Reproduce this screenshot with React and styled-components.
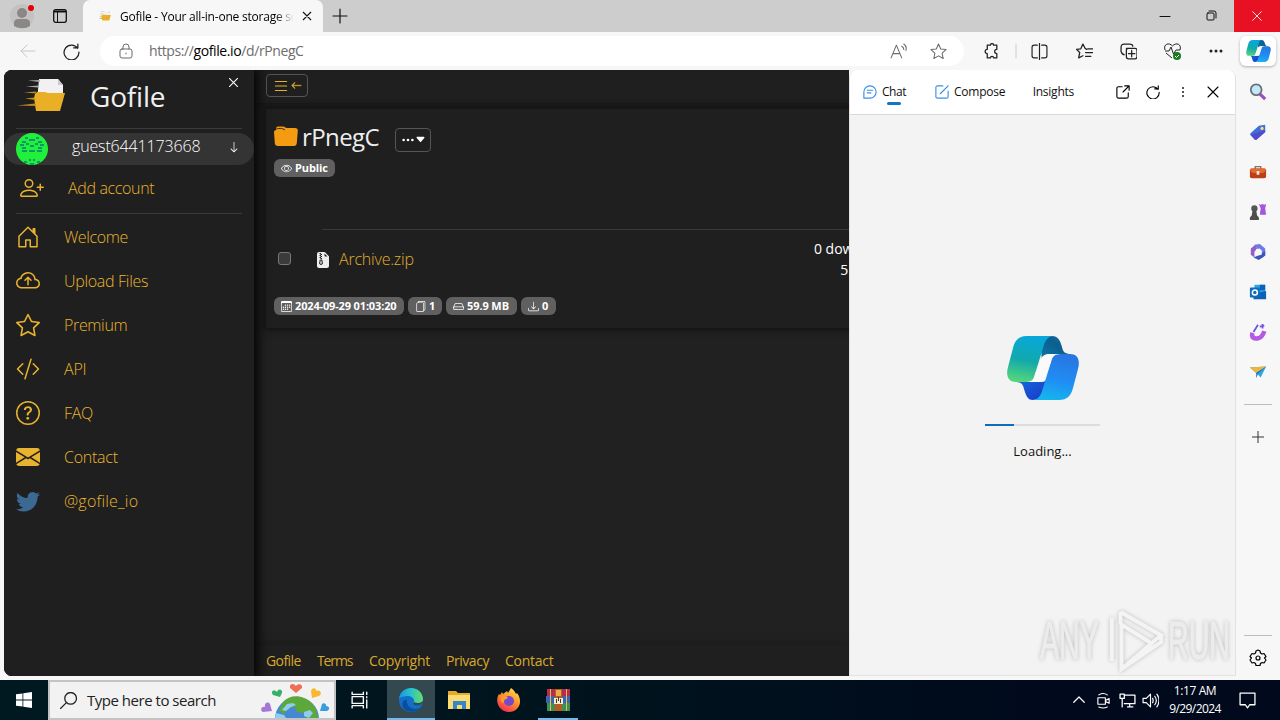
import React from 'react';
import styled, { createGlobalStyle } from 'styled-components';
import {
    BsPersonPlus, BsHouseDoor, BsCloudArrowUp, BsStar, BsCodeSlash, BsQuestionCircle,
    BsEnvelopeFill, BsTwitter, BsArrowLeft, BsArrowDown, BsList, BsThreeDots, BsCaretDownFill, BsEye,
    BsCalendar3, BsFileEarmarkZipFill, BsHdd, BsDownload, BsFiles
} from 'react-icons/bs';

const GlobalStyle = createGlobalStyle`
    * {
        box-sizing: border-box;
    }
    body {
        margin: 0;
        width: 1280px;
        height: 720px;
        overflow: hidden;
        font-family: 'Open Sans', 'Noto Sans', sans-serif;
        font-size: 13px;
    }
    svg {
        display: block;
        flex: none;
    }
`

const Screen = styled.div`
    display: flex;
    flex-direction: column;
    width: 1280px;
    height: 720px;
    background-color: #f7f7f7;
    position: relative;
    overflow: hidden;
`

const Label = styled.span`
    white-space: pre;
    flex: none;
    padding-top: ${({drop}) => drop || 0}px;
    font-size: ${({size}) => size || 13}px;
    font-weight: ${({weight}) => weight || 400};
    letter-spacing: ${({spacing}) => spacing || 0}px;
    color: ${({color}) => color || 'inherit'};
    line-height: 1.2;
`

const Gap = styled.div`
    flex: ${({grow}) => grow ? 1 : 'none'};
    width: ${({w}) => w || 0}px;
    height: ${({h}) => h || 0}px;
`

/* browser chrome */

const TitleBar = styled.div`
    display: flex;
    height: 32px;
    background-color: #cdcdcd;
`

const Profile = styled.div`
    display: flex;
    align-items: center;
    gap: 17px;
    width: 83px;
    padding-left: 10px;
`

const Tab = styled.div`
    display: flex;
    align-items: center;
    width: 240px;
    padding: 0 10px 0 16px;
    border-radius: 7px 7px 0 0;
    background-color: #f7f7f7;
`

const TabTitle = styled.div`
    width: 174px;
    margin: 0 8px 0 8px;
    overflow: hidden;
    -webkit-mask-image: linear-gradient(90deg, #000 155px, transparent 174px);
`

const CloseWindow = styled.div`
    display: flex;
    align-items: center;
    justify-content: center;
    width: 46px;
    background-color: #e81123;
`

const Toolbar = styled.div`
    display: flex;
    align-items: center;
    height: 38px;
    color: #222;
`

const Address = styled.div`
    display: flex;
    align-items: center;
    width: 864px;
    height: 30px;
    padding: 0 17px 0 18px;
    border-radius: 15px;
    background-color: #fff;
    color: #6d6d6d;
`

const CopilotButton = styled.div`
    display: flex;
    align-items: center;
    justify-content: center;
    width: 36px;
    height: 30px;
    border-radius: 6px;
    background-color: #fff;
    box-shadow: 0 1px 3px rgba(0, 0, 0, .3);
`

const Body = styled.div`
    display: flex;
    height: 610px;
    padding: 0 0 4px 4px;
`

/* gofile page */

const Page = styled.div`
    display: flex;
    width: 845px;
    height: 606px;
    border-radius: 8px 0 0 8px;
    overflow: hidden;
    background-color: #212121;
    color: #fff;
`

const Sidebar = styled.div`
    display: flex;
    flex-direction: column;
    width: 250px;
    z-index: 1;
    background-color: #1f1f1f;
    box-shadow: 2px 0 10px 2px #050505;
`

const Brand = styled.div`
    display: flex;
    height: 58px;
    padding: 9px 14px 0 13px;
    align-items: flex-start;
`

const BrandClose = styled.div`
    margin-top: -3px;
`

const Divider = styled.div`
    height: 1px;
    margin: 0 12px;
    background-color: #3b3b3b;
`

const Account = styled.div`
    display: flex;
    align-items: center;
    height: 32px;
    margin-top: 4px;
    padding: 0 14px 0 12px;
    border-radius: 16px;
    background-color: #343434;
`

const AccountName = styled.div`
    display: flex;
    flex: 1;
    align-items: center;
    justify-content: space-between;
    padding-bottom: 5px;
`

const MenuItem = styled.div`
    display: flex;
    align-items: center;
    height: 44px;
    padding-left: ${({indent}) => indent || 12}px;
    gap: 24px;
    color: #e8b42f;
`

const Main = styled.div`
    display: flex;
    flex-direction: column;
    width: 595px;
`

const Header = styled.div`
    height: 33px;
    padding: 4px 12px;
    background-color: #1f1f1f;
    box-shadow: 0 1px 8px #141414;
`

const OutlineButton = styled.div`
    display: flex;
    align-items: center;
    justify-content: center;
    gap: ${({gap}) => gap || 0}px;
    width: ${({w}) => w}px;
    height: ${({h}) => h}px;
    margin-top: ${({drop}) => drop || 0}px;
    border: 1px solid #555;
    border-radius: 4px;
    color: ${({color}) => color};
`

const Card = styled.div`
    display: flex;
    flex-direction: column;
    height: 219px;
    width: 700px;
    margin: 6px 0 0 12px;
    padding: 0 8px;
    background-color: #1f1f1f;
    box-shadow: 0 0 6px 2px #121212;
`

const Row = styled.div`
    display: flex;
    align-items: center;
    height: ${({h}) => h}px;
    gap: ${({gap}) => gap || 0}px;
`

const Badge = styled.div`
    display: flex;
    align-items: center;
    gap: 3px;
    height: 18px;
    width: ${({w}) => w}px;
    padding-left: 7px;
    border-radius: 6px;
    background-color: #606060;
`

const Checkbox = styled.div`
    width: 13px;
    height: 13px;
    margin: 0 0 2px 4px;
    border: 1px solid #777;
    border-radius: 3px;
    background-color: #3b3b3b;
`

const FileLine = styled.div`
    height: 1px;
    margin-left: 48px;
    background-color: #383838;
`

const Stats = styled.div`
    display: flex;
    flex-direction: column;
    align-items: flex-end;
    gap: 4px;
    width: 120px;
    padding-top: 1px;
`

const Footer = styled.div`
    display: flex;
    align-items: center;
    height: 31px;
    margin-top: auto;
    padding-left: 12px;
    background-color: #1f1f1f;
    box-shadow: 0 0 8px #181818;
    color: #d9a92e;
`

const FooterLink = styled.div`
    width: ${({w}) => w}px;
`

/* copilot panel */

const Panel = styled.div`
    display: flex;
    flex-direction: column;
    width: 387px;
    border: 1px solid #e2e2e2;
    border-width: 0 1px 1px 1px;
    border-radius: 8px 8px 0 0;
    background-color: #f3f3f3;
    overflow: hidden;
`

const PanelHeader = styled.div`
    display: flex;
    align-items: center;
    height: 45px;
    border-bottom: 1px solid #dadada;
    background-color: #fff;
`

const ChatTab = styled.div`
    display: flex;
    flex-direction: column;
    align-items: center;
    width: 24px;
    padding-top: 2px;
    margin-top: 4px;
    gap: 3px;
    &:after {
        content: '';
        width: 14px;
        height: 3px;
        border-radius: 2px;
        background-color: #0f77c8;
    }
`

const Loader = styled.div`
    display: flex;
    flex-direction: column;
    align-items: center;
    padding-top: 221px;
`

const Progress = styled.div`
    width: 115px;
    height: 2px;
    margin: 24px 0 18px;
    background: linear-gradient(90deg, #0f6cbd 29px, #dcdcdc 29px);
`

const Rail = styled.div`
    display: flex;
    flex-direction: column;
    align-items: center;
    width: 44px;
    padding-top: 13px;
`

const RailIcon = styled.div`
    height: 20px;
    margin-bottom: 20px;
`

const RailLine = styled.div`
    width: 28px;
    height: 1px;
    flex: none;
    background-color: #bdbdbd;
`

const Watermark = styled.div`
    position: absolute;
    left: 1040px;
    top: 608px;
    display: flex;
    align-items: center;
    height: 66px;
    width: 194px;
    filter: drop-shadow(0 0 2px rgba(0, 0, 0, .22));
`

const MarkText = styled.div`
    width: ${({w}) => w}px;
    font-family: 'Liberation Sans Narrow', 'Liberation Sans', sans-serif;
    font-size: 53px;
    line-height: 66px;
    color: #ececec;
    -webkit-text-stroke: 1px #ececec;
    white-space: nowrap;
    transform: scaleX(.54);
    transform-origin: 0 50%;
`

/* taskbar */

const Taskbar = styled.div`
    display: flex;
    align-items: center;
    height: 40px;
    background: linear-gradient(90deg, #001820, #00131d 50%, #000a1c 80%);
    color: #fff;
`

const StartButton = styled.div`
    display: flex;
    align-items: center;
    justify-content: center;
    width: 48px;
`

const Search = styled.div`
    display: flex;
    align-items: center;
    width: 288px;
    height: 40px;
    padding-left: 10px;
    border: 2px solid #c3c3c3;
    background-color: #f2f2f2;
    color: #222;
    overflow: hidden;
`

const Task = styled.div`
    display: flex;
    align-items: center;
    justify-content: center;
    width: ${({w}) => w || 48}px;
    height: 40px;
    margin-right: ${({mr}) => mr || 0}px;
    background-color: ${({$active}) => $active ? '#344850' : 'transparent'};
    box-shadow: ${({$open}) => $open ? 'inset 0 -2px #76b9ed' : 'none'};
`

const Clock = styled.div`
    display: flex;
    flex-direction: column;
    align-items: center;
    gap: 4px;
    width: 56px;
    margin: 0 16px 0 8px;
`

const Line = ({w = 16, h = w, box = '0 0 16 16', d, stroke = 'currentColor', sw = 1}) => (
    <svg width={w} height={h} viewBox={box} fill="none" stroke={stroke} strokeWidth={sw} strokeLinecap="round" strokeLinejoin="round">
        <path d={d}/>
    </svg>
)

const icons = {
    close: 'M3 3l10 10M13 3L3 13',
    star: 'M8 1l2.1 4.6 5 .6-3.700 3.400 1 5L8 12.100l-4.400 2.500 1-5L.9 6.200l5-.6z',
    reload: 'M14 4.500V1M14 4.500h-4M13.800 5A7 7 0 1 0 15 8.500',
};

const CopilotLogo = ({w, h}) => (
    <svg width={w} height={h} viewBox="0 0 72 64">
        <defs>
            <linearGradient id="cpGreen" x1=".6" y1="0" x2=".4" y2="1">
                <stop offset="0" stopColor="#08a7dc"/>
                <stop offset=".55" stopColor="#12a9ac"/>
                <stop offset="1" stopColor="#52d57c"/>
            </linearGradient>
            <linearGradient id="cpBlue" x1=".6" y1="0" x2=".4" y2="1">
                <stop offset="0" stopColor="#2876df"/>
                <stop offset=".55" stopColor="#218cf4"/>
                <stop offset="1" stopColor="#15b5ed"/>
            </linearGradient>
            <linearGradient id="cpTop" x1="0" y1="1" x2="1" y2="0">
                <stop offset="0" stopColor="#0b7ba8"/>
                <stop offset=".6" stopColor="#0b5f8f"/>
                <stop offset="1" stopColor="#1078ac"/>
            </linearGradient>
            <linearGradient id="cpLow" x1="0" y1="0" x2="1" y2="1">
                <stop offset="0" stopColor="#176fdf"/>
                <stop offset="1" stopColor="#1836c7"/>
            </linearGradient>
        </defs>
        <path fill="url(#cpTop)" d="M33 0h12c6 0 8 4 10 11 1 5 3 7 9 7H45c-6 0-8 2-10 8z"/>
        <path fill="url(#cpLow)" d="M8 46h26c4 0 6-2 8-6l-6 14c-2 7-5 10-10 10-6 0-7-5-9-11-1-5-3-7-9-7z"/>
        <path fill="url(#cpGreen)" d="M20 0h27c-6 0-9 4-11 12l-8 26c-1 5-3 8-8 8H9C0 46-1 38 1 31L6 12C8 4 12 0 20 0z"/>
        <path fill="url(#cpBlue)" d="M53 18h10c9 0 10 8 8 15l-5 19c-2 8-6 12-14 12H25c6 0 9-4 11-12l8-26c1-5 3-8 9-8z"/>
        <path fill="#fafafa" d="M53 18H42c-5 0-7 2-8.500 7L28 38c-1 5-3 8-8 8h11c5 0 6.500-2 7.800-6L44 26c1-5 3-8 9-8z"/>
    </svg>
)

const GofileLogo = ({w, h, box = '0 0 48 34'}) => (
    <svg width={w} height={h} viewBox={box}>
        <path fill="#f1f1f4" d="M22 0h19l5 6v16H20z"/>
        <path fill="#c9c9cf" d="M41 0v6h5z"/>
        <path fill="#aaa" d="M11 1.500l12-.500-.500 2zM9 7.500l13-1-.500 2z"/>
        <path fill="#e9af25" d="M18 15l2-2h8l3 1h17l-5 18H19l-2-13z"/>
        <path fill="#b98c22" d="M7 13.500l12-1v2zM8 19.500l9-1 1 2.500zM0 26.500l18-2 1 2.500z"/>
    </svg>
)

const Avatar = () => (
    <svg width="32" height="32" viewBox="0 0 32 32">
        <clipPath id="avatar"><circle cx="16" cy="16" r="16"/></clipPath>
        <g clipPath="url(#avatar)">
            <path fill="#20f03c" d="M0 0h32v32H0z"/>
            <path stroke="#087a78" strokeWidth="1.600" d="M9 5h3M20 5h3M13 7h6M6 9h4M22 9h4M4 12h4M10 11h3M19 11h3M24 12h4M14 13h4M6 15h4M22 15h4M6 18h5M13 18h6M21 18h5M13 27h2M17 27h2M8 29h3M21 29h3M14 31h4"/>
        </g>
    </svg>
)

const FolderIcon = () => (
    <svg width="24" height="23" viewBox="0 0 24 23">
        <path fill="#f39c12" d="M2 3c0-2 1-2.500 3-2.500h4C11 .5 11 2 13 2h8c2 0 3 1 2.800 3l-1 12c-.2 2-1 3-3 3H4c-2 0-3-1-3.200-3L0 6c0-1 1-2 2-2z"/>
        <path stroke="#33270f" fill="none" d="M2 3.500C3 2 9 2 11 4"/>
    </svg>
)

const railIcons = [
    <><path d="M12 12l6 6" stroke="#a24bc4" strokeWidth="3.500"/><circle cx="8" cy="7.500" r="6" fill="#c5e8f5" stroke="#676f7b" strokeWidth="2"/></>,
    <><path fill="#3c70dd" d="M2 11l9-8 7-1v8l-9 8c-1 1-2 1-3 0l-4-4c-1-1-1-2 0-3z"/><path fill="#544bcb" d="M2 13l16-5v2l-9 8c-1 1-2 1-3 0z"/><circle cx="14.500" cy="6" r="1.800" fill="#ffdf72"/></>,
    <><path d="M7 7V4h6v3" fill="none" stroke="#777" strokeWidth="1.600"/><rect x="1" y="6" width="18" height="11" rx="2" fill="#b84119"/><path fill="#e66a2a" d="M1 8c0-1 1-2 2-2h14c1 0 2 1 2 2l-3 3H4z"/><path fill="#eee" d="M8.500 9h3v4h-3z"/></>,
    <><path fill="#a655dd" d="M11 1l2 1 2-1 2 1 2-1-1 5 1 7h-7l1-7z"/><circle cx="6" cy="6" r="3.500" fill="#555"/><path fill="#4d4d4f" d="M4 8h4l1 6 2 2v3H1v-3l2-2z"/></>,
    <><path fill="#6d7be8" d="M6 2l6-1 6 5v8l-4 3V8l-5-2z"/><path fill="#3858b7" d="M18 9v5l-7 5-6-3 7-3z"/><path fill="#9360cb" d="M7 2l2 4-3 4v6l-4-3V6z"/><path fill="#f7f7f7" d="M8 7l4-1 2 3v4l-4 1-3-3z"/></>,
    <><path fill="#2aa7e7" d="M6 2h12v12H6z"/><path fill="#0a63b5" d="M12 2h6v6h-6zM5 12l14-3v9H5z"/><rect x="1" y="5" width="11" height="11" rx="1" fill="#0f6cbd"/><circle cx="6.500" cy="10.500" r="2.800" fill="none" stroke="#fff" strokeWidth="1.700"/></>,
    <><path fill="none" stroke="#b459e5" strokeWidth="5" d="M4 11c-2 5 2 7 6 6 5-1 6-5 7-8"/><path stroke="#7455df" strokeWidth="2" d="M5 10l5-8M12 4l5-1M15 1v5"/></>,
    <><path fill="#30a7e6" d="M1 5l18-1-6 12-4-4z"/><path fill="#edb53b" d="M1 5l18-1-11 7z"/><path fill="#1676c6" d="M8 11l11-7-9 8-2 5z"/></>
];

const menu = [
    { name: 'Welcome', icon: BsHouseDoor, spacing: -0.4 },
    { name: 'Upload Files', icon: BsCloudArrowUp, spacing: -0.3 },
    { name: 'Premium', icon: BsStar, spacing: -0.35 },
    { name: 'API', icon: BsCodeSlash, spacing: -0.2 },
    { name: 'FAQ', icon: BsQuestionCircle, spacing: -0.3 },
    { name: 'Contact', icon: BsEnvelopeFill, spacing: -0.25 },
    { name: '@gofile_io', icon: BsTwitter, color: '#3c6894', spacing: 0.2 },
];

const footerLinks = [
    { name: 'Gofile', w: 51, spacing: -0.6 },
    { name: 'Terms', w: 52, spacing: -1.1 },
    { name: 'Copyright', w: 77, spacing: -0.25 },
    { name: 'Privacy', w: 59, spacing: -0.45 },
    { name: 'Contact', w: 60, spacing: -0.25 },
];

const BrowserTop = () => (
    <>
        <TitleBar>
            <Profile>
                <svg width="26" height="26" viewBox="0 0 26 26">
                    <circle cx="12" cy="13" r="12" fill="#c4c2c0"/>
                    <circle cx="12" cy="10" r="5" fill="#8b8786"/>
                    <path fill="#8b8786" d="M4 23v-3c0-3 2-4 4-4h8c2 0 4 1 4 4v3c-5 3-11 3-16 0z"/>
                    <circle cx="21" cy="5" r="3" fill="#e60000"/>
                </svg>
                <svg width="14" height="14" viewBox="0 0 14 14" fill="none" stroke="#111">
                    <rect x=".7" y=".7" width="12.600" height="12.600" rx="2" strokeWidth="1.300"/>
                    <path strokeWidth="2" d="M1 2.500h12"/>
                    <path d="M4.500 3v10"/>
                </svg>
            </Profile>
            <Tab>
                <GofileLogo w={13} h={10} box="10 0 40 34"/>
                <TabTitle><Label size={12} spacing={-0.22} color="#000">Gofile - Your all-in-one storage solution</Label></TabTitle>
                <Line w={12} d={icons.close} stroke="#111" sw={1.5}/>
            </Tab>
            <Gap w={9}/>
            <Row h={32}><Line w={16} d="M8 1v14M1 8h14" stroke="#111" sw={1.200}/></Row>
            <Gap grow="true"/>
            <Row h={32} gap={34}>
                <Line w={12} h={12} box="0 0 12 12" d="M1 6.500h10" stroke="#111"/>
                <Line w={12} box="0 0 12 12" d="M3 3h5q1 0 1 1v5q0 1-1 1H3q-1 0-1-1V4q0-1 1-1zM4 1h5q2 0 2 2v5" stroke="#111"/>
            </Row>
            <Gap w={17}/>
            <CloseWindow><Line w={14} d={icons.close} stroke="#fff"/></CloseWindow>
        </TitleBar>
        <Toolbar>
            <Gap w={20}/>
            <Line w={16} d="M15 8H1M7 2L1 8l6 6" stroke="#c8c8c8"/>
            <Gap w={27}/>
            <Line w={17} d={icons.reload} sw={1.2}/>
            <Gap w={20}/>
            <Address>
                <Line w={16} d="M4 6h8q2 0 2 2v5q0 2-2 2H4q-2 0-2-2V8q0-2 2-2zM5 6V4a3 3 0 0 1 6 0v2M8 10v1" />
                <Gap w={15}/>
                <Label size={14} spacing={-0.4}>https://</Label>
                <Label size={14} spacing={-0.4} color="#000">gofile.io</Label>
                <Label size={14} spacing={-0.4}>/d/rPnegC</Label>
                <Gap grow="true"/>
                <Line w={17} d="M1 14L6 2l5 12M3 10h6M11 3q2 1 2 3M13 1q3 2 2 6"/>
                <Gap w={23}/>
                <Line w={17} d={icons.star}/>
            </Address>
            <Gap w={19}/>
            <Line w={17} d="M4 2h3a1.500 1.500 0 0 1 3 0h3v4a2 2 0 0 0 0 4v4h-3a1.500 1.500 0 0 0-3 0H4v-4a2 2 0 0 1 0-4z" sw={1.200}/>
            <Gap w={15}/>
            <Line w={2} h={16} box="0 0 2 16" d="M1 1v14" stroke="#ccc"/>
            <Gap w={14}/>
            <Line w={17} d="M6 2H3Q1 2 1 4v8q0 2 2 2h3M8 0v16M10 2h3q2 0 2 2v8q0 2-2 2h-3" sw={1.100}/>
            <Gap w={28}/>
            <Line w={17} d="M10 6L8.500 5 6.500 1 4.500 5.500l-4 .5 3 3-1 5 4-2M11 5.500h5M9 9h7M9 12.500h5" sw={1.200}/>
            <Gap w={27}/>
            <Line w={17} d="M6 5h8q2 0 2 2v6q0 2-2 2H8q-2 0-2-2V7q0-2 2-2M11 7v6M8 10h6M4 11Q2 11 1 8V4q0-3 3-3h5q3 0 3 2" sw={1.200}/>
            <Gap w={27}/>
            <svg width="17" height="17" viewBox="0 0 17 17" fill="none" stroke="#222">
                <path d="M1 7C-1 1 5-1 8.500 3 12-1 18 1 16 7M2 10l6 5M1 8h4l2-4 2.500 7L12 7h4"/>
                <circle cx="13" cy="13" r="4" fill="#187a23" stroke="none"/>
                <path stroke="#fff" d="M11 13l1.500 1.500L15 12"/>
            </svg>
            <Gap w={27}/>
            <BsThreeDots size={16}/>
            <Gap w={16}/>
            <CopilotButton><CopilotLogo w={25} h={22}/></CopilotButton>
        </Toolbar>
    </>
)

const GofileSidebar = () => (
    <Sidebar>
        <Brand>
            <GofileLogo w={48} h={34}/>
            <Gap w={25}/>
            <Label size={28} weight={500} spacing={-0.2} drop={1} color="#f0f0f0">Gofile</Label>
            <Gap grow="true"/>
            <BrandClose><Line w={13} d={icons.close} sw={1.300}/></BrandClose>
        </Brand>
        <Divider/>
        <Account>
            <Avatar/>
            <Gap w={24}/>
            <AccountName>
                <Label size={16} weight={300} spacing={-0.15}>guest6441173668</Label>
                <BsArrowDown size={12}/>
            </AccountName>
        </Account>
        <Gap h={1}/>
        <MenuItem indent={16}>
            <BsPersonPlus size={24}/>
            <Label size={16} weight={300} drop={1} spacing={-0.35}>Add account</Label>
        </MenuItem>
        <Gap h={3}/>
        <Divider/>
        <Gap h={1}/>
        {menu.map(({name, icon: Icon, color, spacing}) => (
            <MenuItem key={name}>
                <Icon size={24} color={color}/>
                <Label size={16} weight={300} drop={1} spacing={spacing}>{name}</Label>
            </MenuItem>
        ))}
    </Sidebar>
)

const GofileMain = () => (
    <Main>
        <Header>
            <OutlineButton w={42} h={23} gap={1} color="#e6b02c">
                <BsList size={18}/>
                <BsArrowLeft size={11} strokeWidth={0.7}/>
            </OutlineButton>
        </Header>
        <Card>
            <Gap h={9}/>
            <Row h={38}>
                <FolderIcon/>
                <Gap w={4}/>
                <Label size={24} spacing={-0.6} color="#eee">rPnegC</Label>
                <Gap w={16}/>
                <OutlineButton w={36} h={24} drop={5} color="#fff">
                    <BsThreeDots size={14}/>
                    <BsCaretDownFill size={11}/>
                </OutlineButton>
            </Row>
            <Gap h={3}/>
            <Badge w={61}><BsEye size={11}/><Label size={11} weight={700} spacing={-0.1}>Public</Label></Badge>
            <Gap h={52}/>
            <FileLine/>
            <Row h={59}>
                <Checkbox/>
                <Gap w={24}/>
                <BsFileEarmarkZipFill size={16} color="#eee"/>
                <Gap w={8}/>
                <Label size={16} weight={300} spacing={-0.2} drop={1} color="#e0ad2e">Archive.zip</Label>
                <Gap grow="true"/>
                <Stats>
                    <Label size={14}>0 downloads</Label>
                    <Label size={14} spacing={0.55}>59.9 MB</Label>
                </Stats>
                <Gap w={61}/>
            </Row>
            <Gap h={8}/>
            <Row h={18} gap={4}>
                <Badge w={130}><BsCalendar3 size={11}/><Label size={11} weight={700} spacing={-0.15}>2024-09-29 01:03:20</Label></Badge>
                <Badge w={34}><BsFiles size={11}/><Label size={11} weight={700}>1</Label></Badge>
                <Badge w={71}><BsHdd size={11}/><Label size={11} weight={700} spacing={-0.1}>59.9 MB</Label></Badge>
                <Badge w={35}><BsDownload size={11}/><Label size={11} weight={700}>0</Label></Badge>
            </Row>
        </Card>
        <Footer>
            {footerLinks.map(({name, w, spacing}) => (
                <FooterLink key={name} w={w}><Label size={14} spacing={spacing}>{name}</Label></FooterLink>
            ))}
        </Footer>
    </Main>
)

const CopilotPanel = () => (
    <Panel>
        <PanelHeader>
            <Gap w={13}/>
            <Line w={14} d="M1 15V8a7 7 0 1 1 7 7zM5 6h6M5 9h4" stroke="#3a8ee8" sw={1.300}/>
            <Gap w={5}/>
            <ChatTab><Label size={12} spacing={-0.4} color="#111">Chat</Label></ChatTab>
            <Gap w={29}/>
            <Line w={14} d="M15 7v6q0 2-2 2H3q-2 0-2-2V3q0-2 2-2h6M6 10l9-9" stroke="#3a8ee8" sw={1.300}/>
            <Gap w={5}/>
            <Label size={12} spacing={-0.25} color="#111">Compose</Label>
            <Gap grow="true"/>
            <Label size={12} spacing={-0.25} color="#111">Insights</Label>
            <Gap w={42}/>
            <Line w={14} d="M7 2H3Q1 2 1 4v9q0 2 2 2h9q2 0 2-2V9M10 1h5v5M15 1L8 8" sw={1.300}/>
            <Gap w={16}/>
            <Line w={14} d={icons.reload} sw={1.300}/>
            <Gap w={21}/>
            <Line w={4} h={12} box="0 0 4 12" d="M2 2v0M2 6v0M2 10v0" sw={1.800}/>
            <Gap w={20}/>
            <Line w={16} d={icons.close} sw={1.100}/>
            <Gap w={14}/>
        </PanelHeader>
        <Loader>
            <CopilotLogo w={72} h={64}/>
            <Progress/>
            <Label size={13} color="#111">Loading...</Label>
        </Loader>
    </Panel>
)

const AppRail = () => (
    <Rail>
        {railIcons.map((icon, i) => (
            <RailIcon key={i}><svg width="18" height="18" viewBox="0 0 20 20">{icon}</svg></RailIcon>
        ))}
        <Gap h={1}/>
        <RailLine/>
        <Gap h={26}/>
        <Line w={12} box="0 0 12 12" d="M6 0v12M0 6h12" stroke="#333"/>
        <Gap grow="true"/>
        <RailLine/>
        <Gap h={13}/>
        <Line w={18} box="0 0 18 18" sw={1.200} d="M7 2l2-1 2 1 .5 2 1.500 1 2-.5 2 3-1.500 1.500 1.500 2-2 3-2-.5-1.500 1-.5 2H7l-.5-2-1.500-1-2 .5-2-3L2.500 9 1 7.500l2-3 2 .5 1.500-1zM11 9a2 2 0 1 0-4 0 2 2 0 0 0 4 0"/>
        <Gap h={9}/>
    </Rail>
)

const Globe = () => (
    <svg width="72" height="36" viewBox="0 0 72 36">
        <circle cx="37" cy="37" r="22" fill="#4688d5"/>
        <path fill="#5da83a" d="M23 20c5-6 14-7 21-4 8 3 13 10 14 20H46l-3-5-6-1-2-5-6 1-5 6-5-3z"/>
        <path fill="#8fcdf0" d="M16 31l8 2 2 3H15zM27 22l6-1 3 2-5 2-5 4-4-1zM44 30l6-2 3 3-4 5-5-2z"/>
        <path fill="#ef6f53" d="M36 11l-6-5c-1-5 4-5 6-2 2-3 7-2 6 2z"/>
        <path fill="#36b268" d="M20 15l-7-2c-3-4 1-6 4-3 1-4 6-3 5 1z"/>
        <path fill="#f8b92f" d="M52 16l-1-7c1-4 6-3 5 0 4-2 7 3 3 5z"/>
        <path fill="#a578d8" d="M12 29l-9 1c-4-2-1-6 2-5-1-4 3-6 5-3z"/>
        <path fill="#359fe0" d="M60 29l2-7c2-2 5 0 4 2 4 0 4 4 1 5z"/>
    </svg>
)

const BottomBar = () => (
    <Taskbar>
        <StartButton>
            <svg width="16" height="16" viewBox="0 0 16 16" fill="#fff">
                <path d="M0 2.300L6.500 1.400v6.100H0zM7.300 1.300L16 0v7.500H7.300zM0 8.400h6.500v6.200L0 13.700zM7.300 8.400H16V16l-8.700-1.300z"/>
            </svg>
        </StartButton>
        <Search>
            <Line w={17} d="M15.500 6A5.500 5.500 0 1 1 4.500 6a5.500 5.500 0 0 1 11 0zM6 10L.5 15.500" stroke="#222" sw={1.200}/>
            <Gap w={10}/>
            <Label size={15} spacing={-0.48}>Type here to search</Label>
            <Gap grow="true"/>
            <Globe/>
            <Gap w={2}/>
        </Search>
        <Task w={48} mr={3}>
            <Line w={18} d="M1 1v2h10V1M1 5h10v6H1zM1 15v-2h10v2M14 1v2M14 8v7M14 5v1" sw={1.200}/>
        </Task>
        <Task $active $open>
            <svg width="24" height="24" viewBox="0 0 24 24">
                <defs>
                    <linearGradient id="edge"><stop stopColor="#1696df"/><stop offset=".5" stopColor="#2bc3c9"/><stop offset="1" stopColor="#68dc68"/></linearGradient>
                </defs>
                <circle cx="12" cy="12" r="12" fill="#126fc8"/>
                <path fill="url(#edge)" d="M0 11C2-4 23-3 24 11c0 6-8 7-10 4 3-2 0-7-5-7-4 0-8 1-9 3z"/>
                <path fill="#0c4d9e" d="M8 12c-1 7 6 11 13 8-6 6-15 4-17-1-2-4 1-8 4-7z"/>
                <path fill="#344850" d="M24 13c-1 5-7 5-10 3l1-2c3 2 7 1 9-1z"/>
            </svg>
        </Task>
        <Task mr={2}>
            <svg width="22" height="20" viewBox="0 0 22 20">
                <path fill="#e8a92f" d="M0 1h8l2 2h12v4H0z"/>
                <path fill="#fbdc72" d="M0 5h22v14H0z"/>
                <path fill="#3687c8" d="M5 19v-8h13v8h-4v-4H9v4z"/>
            </svg>
        </Task>
        <Task mr={5}>
            <svg width="24" height="24" viewBox="0 0 24 24">
                <defs>
                    <linearGradient id="fox" x1=".8" y1="0" x2=".2" y2="1"><stop stopColor="#ffe14b"/><stop offset=".5" stopColor="#ff8a2a"/><stop offset="1" stopColor="#f0245b"/></linearGradient>
                </defs>
                <path fill="url(#fox)" d="M5 4l1 2 4-3 1 2 3-5c3 2 4 4 5 6l1-1c7 9 1 19-8 19S-3 14 2 6l1 1z"/>
                <circle cx="12" cy="13" r="5" fill="#7548cf"/>
                <path fill="#ff9b2f" d="M4 8c3 0 6 0 7 2-2 1-5 2-4 5-4-1-4-4-3-7z"/>
            </svg>
        </Task>
        <Task w={40} $open>
            <svg width="25" height="22" viewBox="0 0 25 22">
                <path fill="#b72c49" d="M1 0h23v7H1z"/>
                <path fill="#3f64ae" d="M0 7h24v7H0z"/>
                <path fill="#3c9050" d="M1 14h23v8H1z"/>
                <path fill="#e0b96a" d="M4 0h1v22H4zM20 0h1v22h-1z"/>
                <path fill="#b75b22" d="M9 0h7v22H9z"/>
                <path fill="#e8ae43" d="M10 1h5v6h-5z"/>
                <path fill="#f4ead2" d="M8 9h9v6H8z"/>
                <path fill="#4b3520" d="M10 10h1v4h-1zM14 10h1v4h-1zM12 8h1v4h-1z"/>
            </svg>
        </Task>
        <Gap grow="true"/>
        <Line w={12} d="M1 11l7-7 7 7" sw={1.600}/>
        <Gap w={11}/>
        <Line w={15} h={17} d="M2 5h8v7H2zM10 8l4-2v5l-4-2M3 2q5-3 9 0M3 15q5 2 9 0" sw={1.200}/>
        <Gap w={8}/>
        <Line w={17} d="M5 3h10v8H5M8 14h5M10 11v3M1 2h4v4H1zM3 6v8" sw={1.200}/>
        <Gap w={6}/>
        <Line w={17} d="M1 6h3l4-4v12l-4-4H1zM10 6q1 2 0 4M12 4q3 4 0 8M14 2q4 6 0 12" sw={1.100}/>
        <Clock>
            <Label size={12} spacing={-0.4}>1:17 AM</Label>
            <Label size={12} spacing={-0.6}>9/29/2024</Label>
        </Clock>
        <Line w={17} d="M1 1h14v11h-5l-2 3-2-3H1z" sw={1.200}/>
        <Gap w={24}/>
    </Taskbar>
)

const App = () => (
    <Screen>
        <GlobalStyle/>
        <BrowserTop/>
        <Body>
            <Page>
                <GofileSidebar/>
                <GofileMain/>
            </Page>
            <CopilotPanel/>
            <AppRail/>
        </Body>
        <BottomBar/>
        <Watermark>
            <MarkText w={66}>ANY</MarkText>
            <svg width="58" height="66" viewBox="0 0 60 66" fill="none" stroke="#f4f4f4" strokeWidth="4">
                <path d="M6 54V9M15 3l42 24-41 35V16l32 20M15 3v13M57 27v7L16 62"/>
            </svg>
            <Gap w={4}/>
            <MarkText w={64}>RUN</MarkText>
        </Watermark>
    </Screen>
)

export default App;
